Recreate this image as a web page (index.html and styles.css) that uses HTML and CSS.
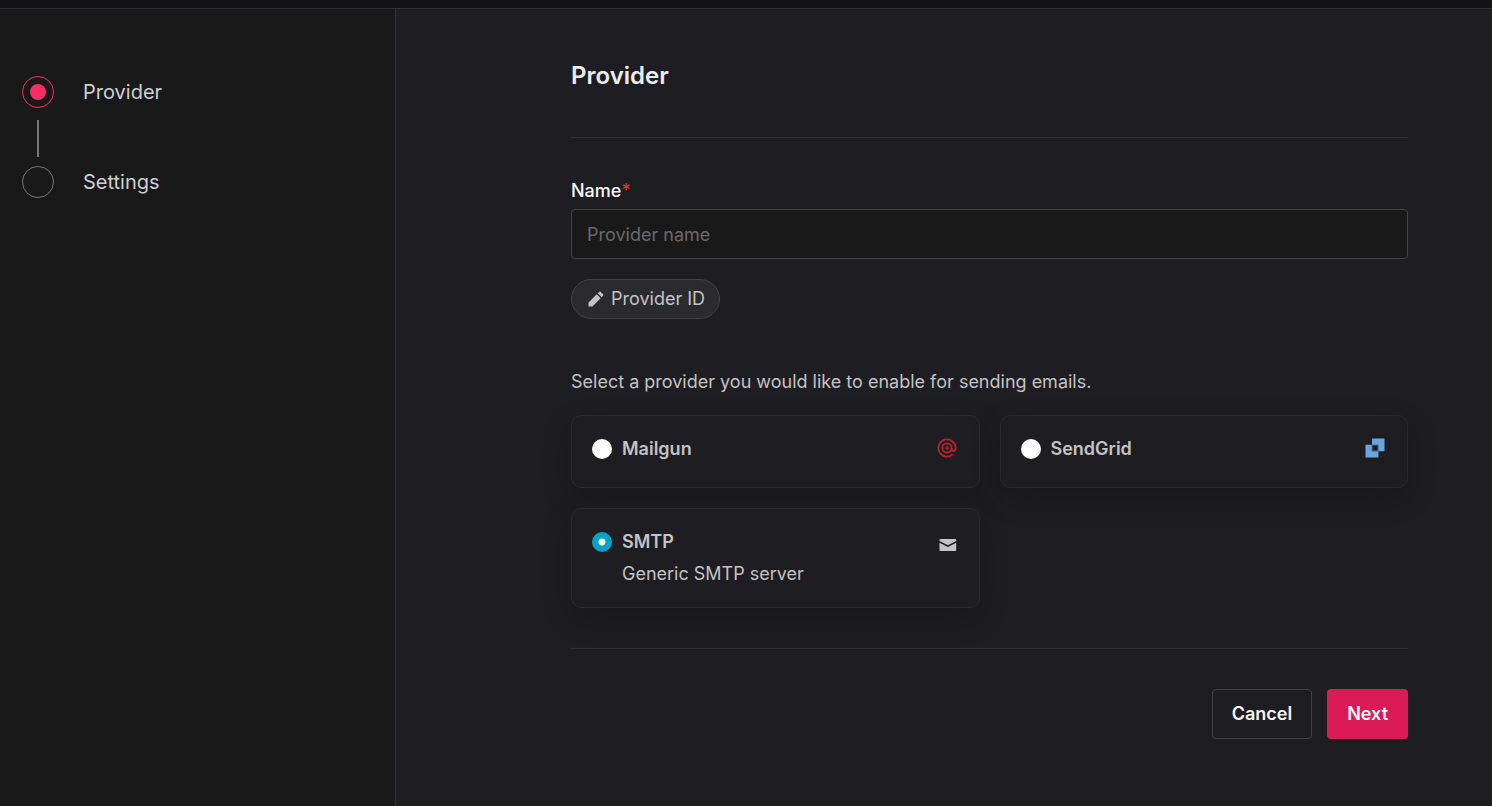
FILE: index.html
```html
<!DOCTYPE html>
<html lang="en">
<head>
  <meta charset="utf-8">
  <meta name="viewport" content="width=device-width, initial-scale=1">
  <title>Provider</title>
  <link rel="stylesheet" href="styles.css">
</head>
<body>
  <header class="topbar"></header>
  <div class="layout">
    <aside class="sidebar">
      <ol class="steps">
        <li class="step step-active" aria-current="step"><span class="step-mark"></span><span>Provider</span></li>
        <li class="step"><span class="step-mark"></span><span>Settings</span></li>
      </ol>
    </aside>
    <main class="content">
      <form class="form">
        <h1 class="title">Provider</h1>
        <div class="field">
          <label class="label" for="name">Name<span class="required">*</span></label>
          <input class="input" id="name" type="text" placeholder="Provider name" required>
        </div>
        <button class="chip" type="button">
          <svg class="chip-icon" viewBox="0 0 24 24" aria-hidden="true"><path d="M2 16.8V22h5.2L18.2 11 13 5.8zM21.4 7.8a1.5 1.5 0 0 0 0-2.1l-3.1-3.1a1.5 1.5 0 0 0-2.1 0L14.4 4.4l5.2 5.2z"/></svg>
          <span>Provider ID</span>
        </button>
        <fieldset class="providers">
          <legend class="legend">Select a provider you would like to enable for sending emails.</legend>
          <div class="cards">
            <label class="card" for="mailgun">
              <input class="radio" id="mailgun" type="radio" name="provider">
              <span class="card-text"><strong class="card-name">Mailgun</strong></span>
              <svg class="card-icon" viewBox="0 0 20 20" aria-hidden="true"><g fill="none" stroke="#b5262e" stroke-width="1.8"><circle cx="10" cy="10" r="4.6"/><path d="M15.8 16.4A8.6 8.6 0 1 1 18.6 10v1c0 2.6-4 2.6-4 0v-1"/></g><circle cx="10" cy="10" r="1.8" fill="#b5262e"/></svg>
            </label>
            <label class="card" for="sendgrid">
              <input class="radio" id="sendgrid" type="radio" name="provider">
              <span class="card-text"><strong class="card-name">SendGrid</strong></span>
              <svg class="card-icon" viewBox="0 0 20 20" aria-hidden="true"><path fill="#67a5df" d="M7 .5h12.5v12.7H13.4v6.3H.5V6.8H7zM7.3 7.3v5.5h5.5V7.3z" fill-rule="evenodd"/><path fill="none" stroke="#33587a" stroke-width=".7" d="M7 7h6.2v6.2H7z"/></svg>
            </label>
            <label class="card" for="smtp">
              <input class="radio" id="smtp" type="radio" name="provider" checked>
              <span class="card-text"><strong class="card-name">SMTP</strong><span>Generic SMTP server</span></span>
              <svg class="card-icon mail-icon" viewBox="0 0 18 18" aria-hidden="true"><path fill="#c3c3c5" d="M1.2 3h15.2q.8 0 .8 1v1L9 9.2.5 5V4q0-1 .7-1zM.5 6.7 9 11l8.2-4.3V14q0 1-.8 1H1.3q-.8 0-.8-1z"/></svg>
            </label>
          </div>
        </fieldset>
        <div class="actions">
          <button class="button button-secondary" type="button">Cancel</button>
          <button class="button button-primary" type="submit">Next</button>
        </div>
      </form>
    </main>
  </div>
</body>
</html>
```
FILE: styles.css
```css
* { box-sizing: border-box; }

body {
  display: flex;
  flex-direction: column;
  min-height: 100vh;
  margin: 0;
  background: #1e1d21;
  color: #c3c3c5;
  font: 18px/28px Inter, "Liberation Sans", sans-serif;
}

button, input { font: inherit; }

.topbar {
  height: 9px;
  background: #131315;
  border-bottom: 1px solid #302f32;
}

.layout {
  display: grid;
  grid-template-columns: 396px 1fr;
  flex: 1;
}

.sidebar {
  padding: 67px 22px;
  background: #19191a;
  border-right: 1px solid #302f32;
}

.steps {
  display: flex;
  flex-direction: column;
  gap: 58px;
  margin: 0;
  padding: 0;
  list-style: none;
}

.step {
  position: relative;
  display: flex;
  align-items: center;
  gap: 29px;
  height: 32px;
  color: #cfcfd1;
  font-size: 20px;
}

.step + .step::before {
  position: absolute;
  bottom: 41px;
  left: 15px;
  width: 2px;
  height: 37px;
  background: #77777a;
  content: "";
}

.step-mark {
  display: flex;
  align-items: center;
  justify-content: center;
  width: 32px;
  height: 32px;
  border: 1px solid #77777a;
  border-radius: 50%;
}

.step-active .step-mark { border-color: #f42d65; }

.step-active .step-mark::after {
  width: 16px;
  height: 16px;
  background: #f42d65;
  border-radius: 50%;
  content: "";
}

.content { padding: 51px 84px 66px 175px; }

.form {
  display: flex;
  flex-direction: column;
}

.title {
  margin: 0 0 39px;
  padding-bottom: 45px;
  border-bottom: 1px solid #302f32;
  color: #ececee;
  font-size: 24px;
  font-weight: 600;
  line-height: 32px;
}

.field {
  display: flex;
  flex-direction: column;
  gap: 4px;
}

.label {
  color: #f7f7f8;
  font-weight: 500;
}

.required {
  color: #e5392f;
  font-weight: 400;
}

.input {
  width: 100%;
  height: 50px;
  padding: 0 15px;
  background: #19191a;
  border: 1px solid #434247;
  border-radius: 4px;
  color: #f7f7f8;
}

.input::placeholder {
  color: #69696c;
  opacity: 1;
}

.chip {
  display: flex;
  align-items: center;
  align-self: flex-start;
  gap: 6px;
  height: 40px;
  margin-top: 20px;
  padding: 0 14px 0 15px;
  background: #2b2a2e;
  border: 1px solid #434247;
  border-radius: 20px;
  color: #c3c3c5;
}

.chip-icon {
  width: 18px;
  height: 18px;
  fill: #c3c3c5;
}

.providers {
  min-width: 0;
  margin: 49px 0 0;
  padding: 0 0 40px;
  border: 0;
  border-bottom: 1px solid #302f32;
}

.legend {
  margin-bottom: 19px;
  padding: 0;
}

.cards {
  display: grid;
  grid-template-columns: 1fr 1fr;
  gap: 20px;
}

.card {
  display: flex;
  align-items: flex-start;
  gap: 10px;
  min-height: 73px;
  padding: 18px 22px 18px 20px;
  background: #1e1d21;
  border: 1px solid #2b2a2e;
  border-radius: 10px;
  box-shadow: 0 10px 30px rgb(0 0 0 / 20%);
  line-height: 30px;
}

.radio {
  flex: none;
  width: 20px;
  height: 20px;
  margin: 5px 0 0;
  appearance: none;
  background: #fff;
  border-radius: 50%;
}

.radio:checked {
  background: radial-gradient(circle, #fff 3px, #00a5c4 4px);
}

.card-text {
  display: flex;
  flex: 1;
  flex-direction: column;
  gap: 2px;
}

.card-name { font-weight: 600; }

.card-icon {
  width: 20px;
  height: 20px;
  margin-top: 4px;
}

.mail-icon {
  width: 18px;
  height: 18px;
  margin-top: 9px;
}

.actions {
  display: flex;
  justify-content: flex-end;
  gap: 15px;
  margin-top: 40px;
}

.button {
  height: 50px;
  padding: 0 19px;
  border: 1px solid transparent;
  border-radius: 4px;
  color: #f7f7f8;
  font-weight: 600;
}

.button-secondary {
  background: transparent;
  border-color: #434247;
}

.button-primary {
  background: #db1b58;
}
```
